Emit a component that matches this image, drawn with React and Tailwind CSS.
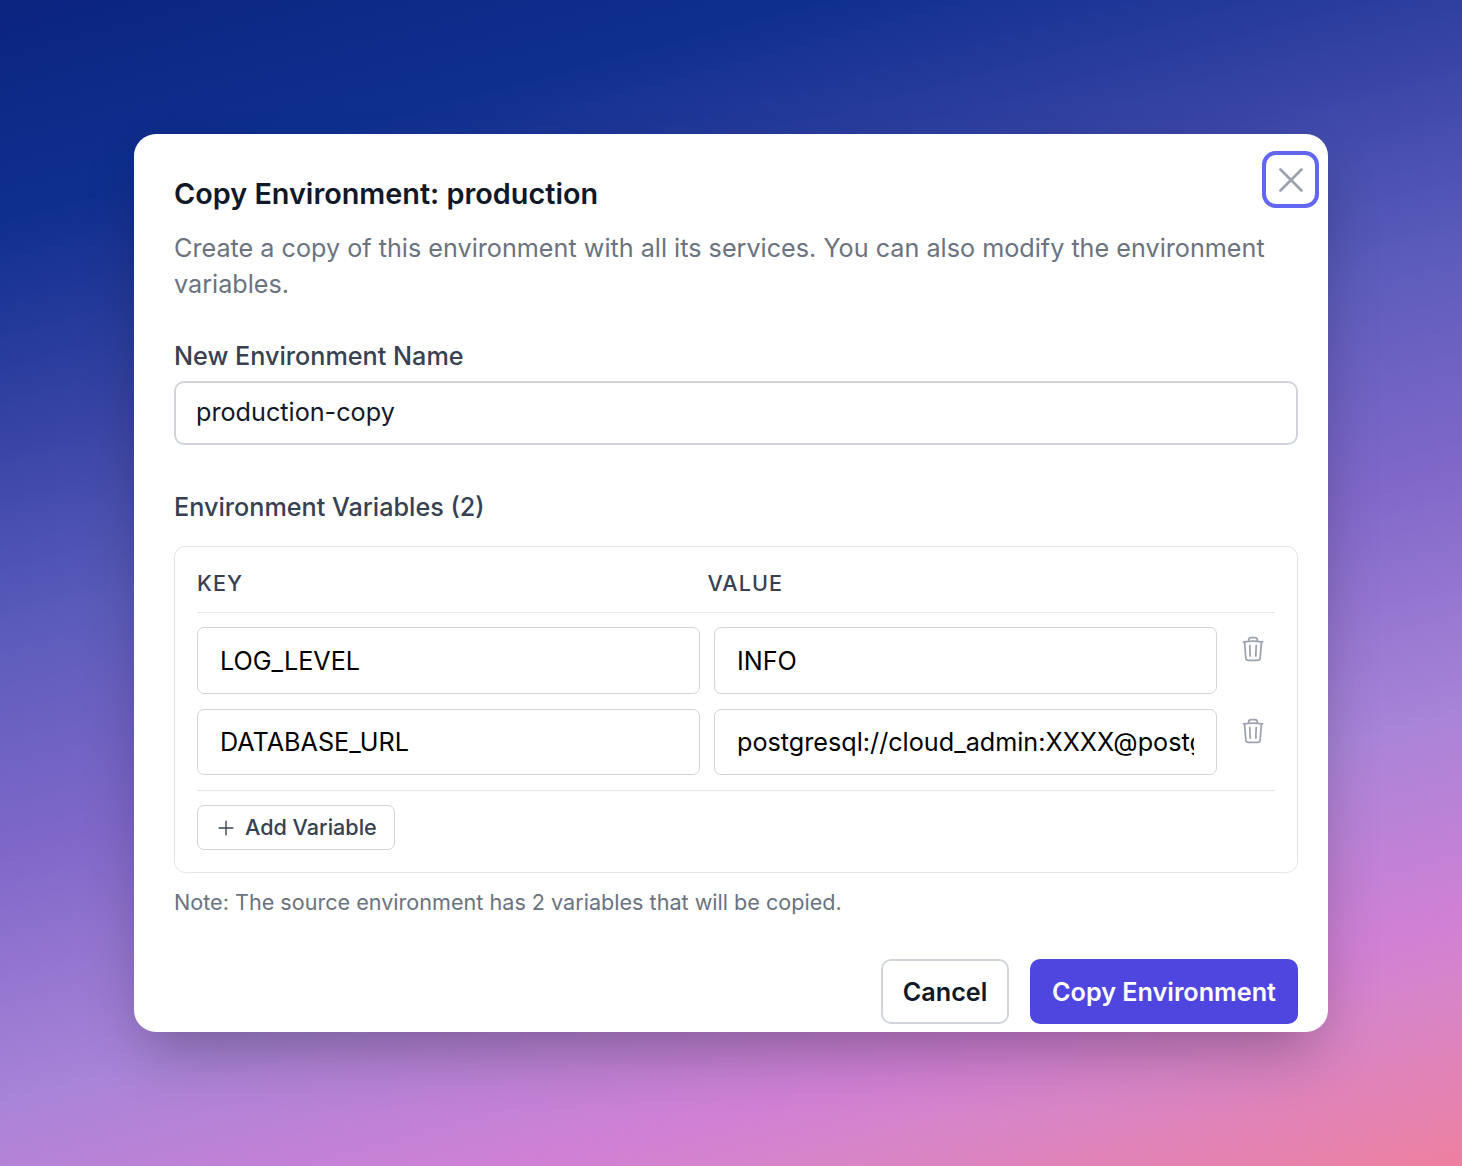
import { HiOutlinePlus, HiOutlineTrash, HiOutlineXMark } from "react-icons/hi2";

const variables = [
  { key: "LOG_LEVEL", value: "INFO" },
  { key: "DATABASE_URL", value: "postgresql://cloud_admin:XXXX@postgres.example.internal:5432/neondb" },
];

function VariableRow({ row }) {
  return (
    <div className="flex items-start">
      <input
        readOnly
        value={row.key}
        className="h-[66.5px] w-[503px] rounded-[7px] border border-[#d1d5db] bg-white px-[22px] pt-[0.5px] text-[25.2px] text-black outline-none"
      />
      <input
        readOnly
        value={row.value}
        className="ml-[14px] h-[66.5px] w-[503px] rounded-[7px] border border-[#d1d5db] bg-white px-[22px] pt-[0.5px] text-[25.2px] text-black outline-none"
      />
      <button type="button" className="ml-[22px] mt-[8px] text-[#9ca3af]" aria-label="Remove variable">
        <HiOutlineTrash className="h-[28px] w-[28px]" />
      </button>
    </div>
  );
}

export default function App() {
  return (
    <div className="flex h-[1166px] justify-center overflow-hidden bg-[linear-gradient(165deg,#0b2580_0%,#0f2f8f_14%,#3442a3_27%,#5c5cbc_41%,#8068c9_55%,#a984d8_71%,#d080d5_84%,#d885c8_89%,#ee80a0_100%)] pt-[134px] font-['Inter',sans-serif]">
      <div className="relative h-[898px] w-[1194px] rounded-[22px] bg-white pl-[40px] pr-[30px] pt-[41px] shadow-[0_28px_60px_-12px_rgba(0,0,0,0.3)]">
        <button
          type="button"
          aria-label="Close"
          className="absolute right-[9px] top-[17px] flex h-[57px] w-[57px] items-center justify-center rounded-[14px] border-4 border-[#6366f1] text-[#9ca3af]"
        >
          <HiOutlineXMark className="h-[42px] w-[42px]" strokeWidth={1.6} />
        </button>

        <h2 className="text-[28.8px] font-semibold leading-[38px] text-[#111827]">Copy Environment: production</h2>
        <p className="mt-[17px] text-[25.2px] leading-[36px] text-[#6b7280]">
          Create a copy of this environment with all its services. You can also modify the environment variables.
        </p>

        <label className="mt-[36px] block text-[25.2px] font-medium leading-[36px] text-[#374151]">New Environment Name</label>
        <input
          readOnly
          value="production-copy"
          className="mt-[7px] block h-[64px] w-full rounded-[10px] border-2 border-[#d1d5db] bg-white px-[20px] pb-[2px] text-[25.2px] text-[#111827] outline-none"
        />

        <h3 className="mt-[44px] text-[25.2px] font-medium leading-[36px] text-[#374151]">Environment Variables (2)</h3>

        <div className="mt-[21px] h-[327px] rounded-[11px] border border-[#e5e7eb] px-[22px]">
          <div className="flex h-[66px] items-center border-b border-[#e5e7eb] pt-[8px] text-[21.6px] font-medium tracking-[1.08px] text-[#374151]">
            <span className="w-[510.5px]">KEY</span>
            <span>VALUE</span>
          </div>
          <div className="flex flex-col gap-[15px] border-b border-[#e5e7eb] pb-[15px] pt-[14px]">
            {variables.map((row) => (
              <VariableRow key={row.key} row={row} />
            ))}
          </div>
          <button
            type="button"
            className="mt-[14px] flex h-[45px] w-[198px] items-center gap-[8px] rounded-[7px] border border-[#d1d5db] bg-white pl-[17px] text-[21.6px] font-medium text-[#374151]"
          >
            <HiOutlinePlus className="h-[22px] w-[22px]" />
            Add Variable
          </button>
        </div>

        <p className="mt-[13px] text-[21.6px] leading-[32px] text-[#6b7280]">
          Note: The source environment has 2 variables that will be copied.
        </p>

        <div className="mt-[41px] flex justify-end gap-[21px]">
          <button
            type="button"
            className="h-[65px] w-[128px] rounded-[10px] border-2 border-[#d1d5db] bg-white pt-[2px] text-[25.2px] font-semibold text-[#111827]"
          >
            Cancel
          </button>
          <button
            type="button"
            className="h-[65px] w-[268px] rounded-[10px] bg-[#4f46e0] pt-[2px] text-[25.2px] font-semibold text-white"
          >
            Copy Environment
          </button>
        </div>
      </div>
    </div>
  );
}
